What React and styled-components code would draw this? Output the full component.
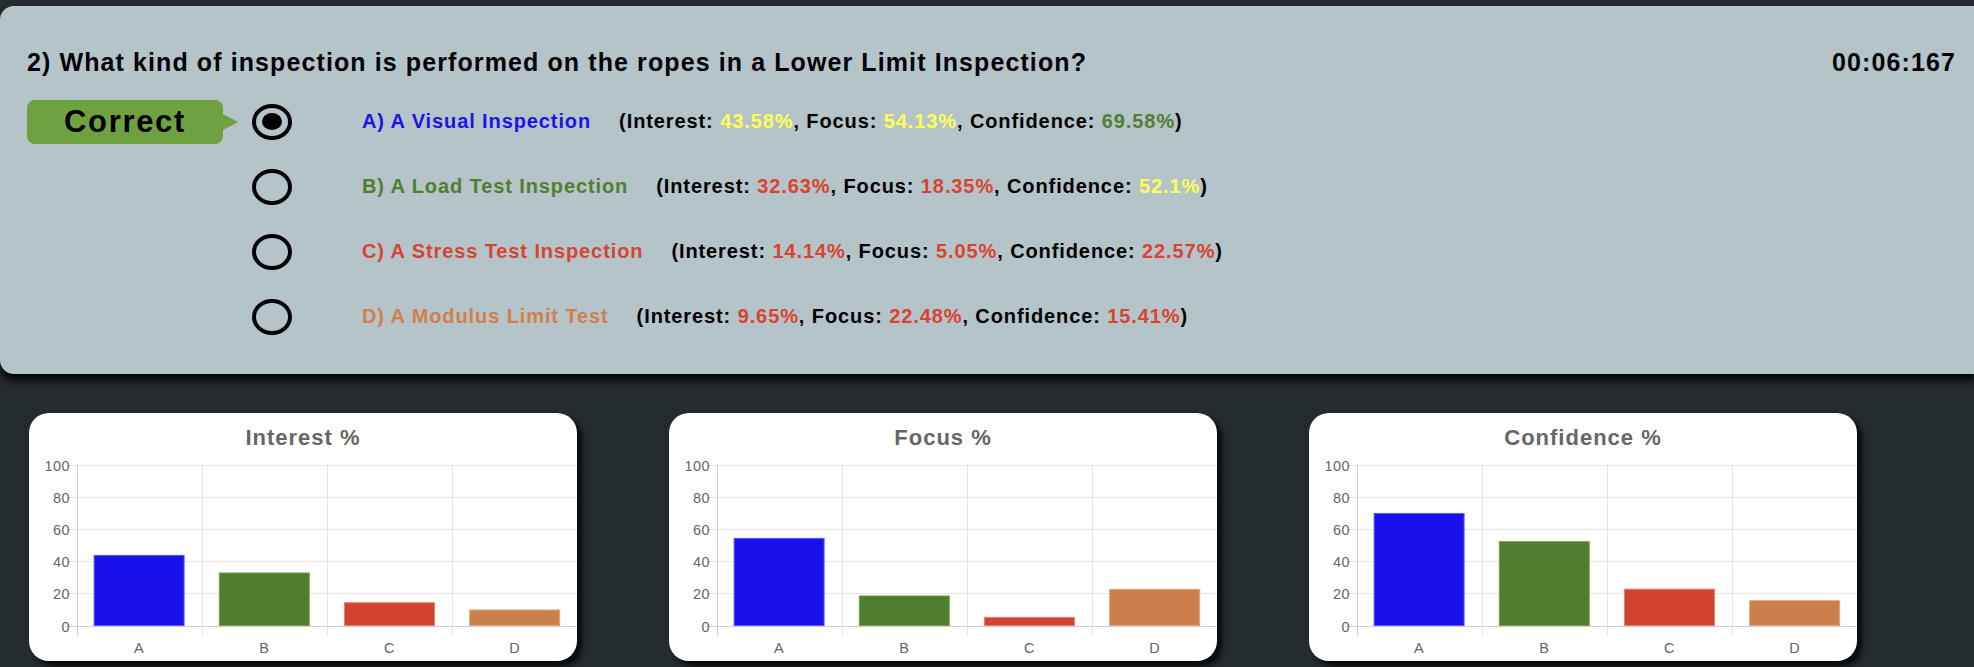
import styled, { createGlobalStyle } from "styled-components";

const GlobalStyle = createGlobalStyle`
  body {
    margin: 0;
    background: #252c2f;
    font-family: "Liberation Sans", Arial, sans-serif;
    overflow: hidden;
  }
`;

const Page = styled.div`
  width: 1974px;
  height: 667px;
  padding-top: 6px;
  box-sizing: border-box;
  overflow: hidden;
`;

const QuestionPanel = styled.section`
  background: #b5c4c8;
  border-radius: 14px 0 0 14px;
  box-shadow: 0 6px 8px #000;
  padding: 41px 18px 25px 27px;
`;

const QuestionHeader = styled.div`
  display: flex;
  justify-content: space-between;
  font-size: 25px;
  line-height: 30px;
  font-weight: bold;
  letter-spacing: 1.1px;
  color: #000;
`;

const Options = styled.div`
  margin-top: 12px;
`;

const OptionRow = styled.div`
  display: flex;
  align-items: center;
  height: 65px;
`;

const BadgeSlot = styled.div`
  width: 225px;
  flex-shrink: 0;
`;

const Badge = styled.div`
  position: relative;
  width: 196px;
  height: 44px;
  border-radius: 8px;
  background: #6ea240;
  display: flex;
  align-items: center;
  justify-content: center;
  font-size: 31px;
  font-weight: bold;
  letter-spacing: 1.7px;
  color: #000;

  &::after {
    content: "";
    position: absolute;
    right: -15px;
    top: 50%;
    transform: translateY(-50%);
    border-left: 15px solid #6ea240;
    border-top: 8px solid transparent;
    border-bottom: 8px solid transparent;
  }
`;

const Radio = styled.div`
  width: 40px;
  height: 36px;
  box-sizing: border-box;
  border: 4px solid #000;
  border-radius: 50%;
  display: flex;
  align-items: center;
  justify-content: center;
  flex-shrink: 0;
`;

const RadioDot = styled.div`
  width: 20px;
  height: 17px;
  border-radius: 50%;
  background: #000;
`;

const OptionLabel = styled.span`
  margin-left: 70px;
  font-size: 20px;
  font-weight: bold;
  letter-spacing: 0.9px;
  color: ${(p) => p.$color};
`;

const Stats = styled.span`
  margin-left: 28px;
  font-size: 20px;
  font-weight: bold;
  letter-spacing: 0.9px;
  color: #000;
`;

const toneColors = { low: "#d9432f", mid: "#ffff55", high: "#4f7f31" };

const Value = styled.span`
  color: ${(p) => toneColors[p.$tone]};
`;

const ChartsRow = styled.div`
  display: flex;
  gap: 92px;
  margin-top: 39px;
  padding-left: 29px;
`;

const ChartCard = styled.div`
  width: 548px;
  height: 248px;
  background: #fff;
  border-radius: 20px;
  box-shadow: 5px 5px 6px rgba(0, 0, 0, 0.85);
  overflow: hidden;
`;

const ChartTitle = styled.div`
  padding-top: 12px;
  line-height: 25px;
  text-align: center;
  font-size: 22px;
  font-weight: bold;
  letter-spacing: 1px;
  color: #666;
`;

const TickText = styled.text`
  font-family: "Liberation Sans", Arial, sans-serif;
  font-size: 14.5px;
  letter-spacing: 0.4px;
  fill: #666;
`;

const options = [
  { key: "A", text: "A) A Visual Inspection", color: "#1c14e6", bar: "#1a10ea", edge: "#5a5aff", interest: 43.58, focus: 54.13, confidence: 69.58, checked: true, correct: true },
  { key: "B", text: "B) A Load Test Inspection", color: "#4f7f31", bar: "#4f7d2f", edge: "#74a256", interest: 32.63, focus: 18.35, confidence: 52.1 },
  { key: "C", text: "C) A Stress Test Inspection", color: "#d64532", bar: "#d44332", edge: "#e8806f", interest: 14.14, focus: 5.05, confidence: 22.57 },
  { key: "D", text: "D) A Modulus Limit Test", color: "#d0804a", bar: "#c97e4b", edge: "#e3a67a", interest: 9.65, focus: 22.48, confidence: 15.41 },
];

const tone = (v) => (v >= 60 ? "high" : v >= 40 ? "mid" : "low");

const AXIS_X = 47.5;
const TOP = 14.5;
const PLOT_H = 161;
const CAT_W = 125.2;
const BAR_W = 90;

function BarChart({ field }) {
  const ticks = [0, 20, 40, 60, 80, 100];
  return (
    <svg width="548" height="211" viewBox="0 0 548 211">
      {ticks.map((t) => {
        const y = Math.round(TOP + PLOT_H * (1 - t / 100)) + 0.5;
        return (
          <g key={t}>
            <line x1="36" x2="548" y1={y} y2={y} stroke={t === 0 ? "#cfcfcf" : "#e5e5e5"} />
            <TickText x="41" y={y + 5.2} textAnchor="end">
              {t}
            </TickText>
          </g>
        );
      })}
      {[0, 1, 2, 3].map((i) => {
        const x = Math.round(AXIS_X + i * CAT_W) + 0.5;
        return (
          <line key={i} x1={x} x2={x} y1={TOP} y2={TOP + PLOT_H + 10} stroke={i === 0 ? "#cfcfcf" : "#e5e5e5"} />
        );
      })}
      {options.map((o, i) => {
        const h = (PLOT_H * o[field]) / 100;
        const x = AXIS_X + i * CAT_W + (CAT_W - BAR_W) / 2;
        return (
          <g key={o.key}>
            <rect x={x} y={TOP + PLOT_H - h} width={BAR_W} height={h} fill={o.bar} stroke={o.edge} strokeWidth="1" />
            <TickText x={AXIS_X + i * CAT_W + CAT_W / 2} y="203" textAnchor="middle">
              {o.key}
            </TickText>
          </g>
        );
      })}
    </svg>
  );
}

const charts = [
  { title: "Interest %", field: "interest" },
  { title: "Focus %", field: "focus" },
  { title: "Confidence %", field: "confidence" },
];

export default function App() {
  return (
    <Page>
      <GlobalStyle />
      <QuestionPanel>
        <QuestionHeader>
          <span>2) What kind of inspection is performed on the ropes in a Lower Limit Inspection?</span>
          <span>00:06:167</span>
        </QuestionHeader>
        <Options>
          {options.map((o) => (
            <OptionRow key={o.key}>
              <BadgeSlot>{o.correct && <Badge>Correct</Badge>}</BadgeSlot>
              <Radio>{o.checked && <RadioDot />}</Radio>
              <OptionLabel $color={o.color}>{o.text}</OptionLabel>
              <Stats>
                (Interest: <Value $tone={tone(o.interest)}>{o.interest}%</Value>, Focus:{" "}
                <Value $tone={tone(o.focus)}>{o.focus}%</Value>, Confidence:{" "}
                <Value $tone={tone(o.confidence)}>{o.confidence}%</Value>)
              </Stats>
            </OptionRow>
          ))}
        </Options>
      </QuestionPanel>
      <ChartsRow>
        {charts.map((c) => (
          <ChartCard key={c.field}>
            <ChartTitle>{c.title}</ChartTitle>
            <BarChart field={c.field} />
          </ChartCard>
        ))}
      </ChartsRow>
    </Page>
  );
}
